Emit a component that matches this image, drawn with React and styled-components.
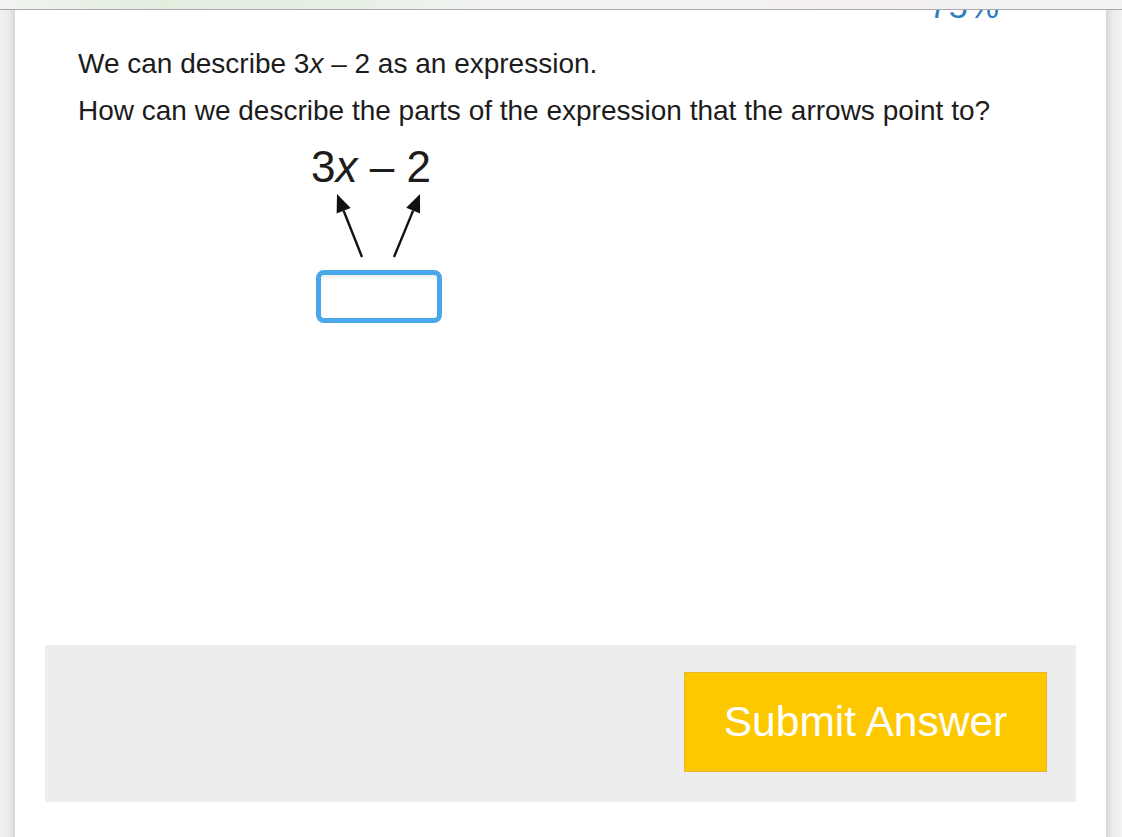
import React from "react";
import styled, { createGlobalStyle } from "styled-components";

const GlobalStyle = createGlobalStyle`
  html, body {
    margin: 0;
    padding: 0;
    background: #e8e8e8;
    font-family: "Liberation Sans", Arial, sans-serif;
  }
`;

const Screen = styled.div`
  display: flex;
  flex-direction: column;
  height: 100vh;
  overflow: hidden;
`;

const TopBar = styled.div`
  height: 9px;
  flex-shrink: 0;
  border-bottom: 1px solid #a9a9a9;
  background: linear-gradient(
    90deg,
    #f1f3f1 0%,
    #e2efdf 14%,
    #e6f0e4 30%,
    #f2f3f3 45%,
    #f3f3f5 62%,
    #f4eef2 76%,
    #f2f2f4 90%,
    #f2f2f2 100%
  );
  position: relative;
  z-index: 2;
`;

const Body = styled.div`
  flex: 1;
  display: flex;
  min-height: 0;
`;

const Gutter = styled.div`
  width: ${(p) => p.$width}px;
  flex-shrink: 0;
  background: linear-gradient(
    ${(p) => (p.$side === "left" ? "90deg" : "270deg")},
    #f3f3f3 0%,
    #ebebeb 60%,
    #d8d8d8 100%
  );
`;

const Card = styled.main`
  flex: 1;
  background: #fff;
  display: flex;
  flex-direction: column;
  overflow: hidden;
`;

const Content = styled.section`
  padding: 0 63px;
`;

const Progress = styled.div`
  height: 12px;
  display: flex;
  justify-content: flex-end;
  padding-right: 43px;
`;

const Percent = styled.span`
  margin-top: -21px;
  font-size: 34px;
  line-height: 1;
  color: #2b7cbf;
  letter-spacing: 1px;
`;

const Question = styled.p`
  margin: 0;
  font-size: 28px;
  line-height: 47px;
  color: #1c1c1c;
  &:first-of-type {
    margin-top: 18px;
  }
`;

const Var = styled.i`
  font-style: italic;
`;

const Figure = styled.div`
  width: 126px;
  margin: 9px 0 0 238px;
  display: flex;
  flex-direction: column;
`;

const Expression = styled.div`
  margin-left: -5px;
  font-size: 44px;
  line-height: 48px;
  color: #1c1c1c;
  white-space: nowrap;
`;

const Arrows = styled.svg`
  display: block;
  width: 126px;
  height: 69px;
`;

const AnswerBox = styled.div`
  margin-top: 10px;
  width: 126px;
  height: 53px;
  box-sizing: border-box;
  border: 5px solid #4aa8ea;
  border-radius: 8px;
  box-shadow: inset 0 3px 3px rgba(0, 0, 0, 0.06);
`;

const Footer = styled.div`
  margin: auto 30px 35px;
  height: 157px;
  background: #ededed;
  display: flex;
  justify-content: flex-end;
  align-items: flex-start;
  padding: 27px 29px 0 0;
  box-sizing: border-box;
`;

const SubmitButton = styled.button`
  width: 363px;
  height: 100px;
  background: #fdc800;
  border: 1px solid #e6b72c;
  color: #fff;
  font-family: "Liberation Sans", Arial, sans-serif;
  font-size: 42.5px;
  cursor: pointer;
  padding: 0;
`;

const Arrow = ({ x1, y1, x2, y2 }) => {
  const a = Math.atan2(y2 - y1, x2 - x1);
  const len = 18;
  const w = 7.5;
  const bx = x2 - len * Math.cos(a);
  const by = y2 - len * Math.sin(a);
  const px = -Math.sin(a) * w;
  const py = Math.cos(a) * w;
  return (
    <g>
      <line x1={x1} y1={y1} x2={bx} y2={by} stroke="#111" strokeWidth="2.4" />
      <polygon
        points={`${x2},${y2} ${bx + px},${by + py} ${bx - px},${by - py}`}
        fill="#111"
      />
    </g>
  );
};

export default function App() {
  return (
    <>
      <GlobalStyle />
      <Screen>
        <TopBar />
        <Body>
          <Gutter $side="left" $width={15} />
          <Card>
            <Content>
              <Progress>
                <Percent>75%</Percent>
              </Progress>
              <Question>
                We can describe 3<Var>x</Var> – 2 as an expression.
              </Question>
              <Question>
                How can we describe the parts of the expression that the arrows
                point to?
              </Question>
              <Figure>
                <Expression>
                  3<Var>x</Var> – 2
                </Expression>
                <Arrows viewBox="0 0 126 69">
                  <Arrow x1={46} y1={66} x2={21} y2={3} />
                  <Arrow x1={78} y1={66} x2={104} y2={3} />
                </Arrows>
                <AnswerBox />
              </Figure>
            </Content>
            <Footer>
              <SubmitButton>Submit Answer</SubmitButton>
            </Footer>
          </Card>
          <Gutter $side="right" $width={16} />
        </Body>
      </Screen>
    </>
  );
}
